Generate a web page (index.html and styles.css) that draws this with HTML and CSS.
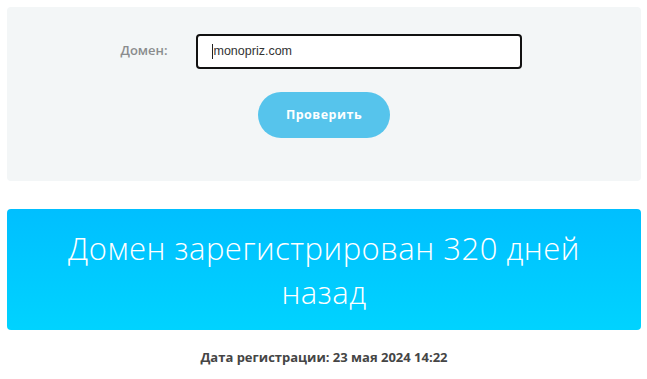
FILE: index.html
```html
<!DOCTYPE html>
<html lang="ru">
<head>
<meta charset="utf-8">
<title>Проверка домена</title>
<link rel="stylesheet" href="styles.css">
</head>
<body>
<div class="page">
  <form class="panel">
    <div class="row">
      <label class="label" for="domain">Домен:</label>
      <div class="input"><span class="caret"></span>monopriz.com</div>
    </div>
    <button type="button" class="btn">Проверить</button>
  </form>
  <div class="result">Домен зарегистрирован 320 дней<br>назад</div>
  <p class="date">Дата регистрации: 23 мая 2024 14:22</p>
</div>
</body>
</html>
```
FILE: styles.css
```css
html, body { margin: 0; padding: 0; background: #fff; }
body { font-family: "Open Sans", "Liberation Sans", sans-serif; }
.page { padding: 7px 6px 0 7px; }
.panel {
  margin: 0;
  background: #f3f6f7;
  border-radius: 4px;
  padding: 27px 0 43px;
  display: flex;
  flex-direction: column;
  align-items: center;
}
.row {
  display: flex;
  align-items: center;
  margin-left: -6px;
}
.label {
  font-size: 13px;
  font-weight: 600;
  color: #8a8c8e;
  width: 75px;
  margin-bottom: 4px;
}
.input {
  box-sizing: border-box;
  width: 326px;
  height: 35px;
  border: 2px solid #111;
  border-radius: 4px;
  background: #fff;
  font-family: "Liberation Sans", sans-serif;
  font-size: 12.5px;
  color: #333;
  display: flex;
  align-items: center;
  padding: 0 0 1px 14px;
}
.caret {
  display: inline-block;
  width: 1px;
  height: 15px;
  background: #222;
  margin-right: 1px;
}
.btn {
  margin-top: 23px;
  width: 132px;
  height: 46px;
  border: 0;
  border-radius: 23px;
  background: #56c4ec;
  color: #fff;
  font-family: "Open Sans", sans-serif;
  font-size: 12.5px;
  letter-spacing: 0.5px;
  font-weight: 700;
  padding: 0 0 2px;
}
.result {
  margin-top: 28px;
  height: 121px;
  box-sizing: border-box;
  padding: 17px 10px 0;
  border-radius: 4px;
  background: linear-gradient(to bottom, #00bfff, #00d3ff);
  color: #fff;
  text-align: center;
  font-size: 31px;
  letter-spacing: 0.5px;
  font-weight: 300;
  line-height: 44px;
}
.date {
  margin: 18px 0 0;
  text-align: center;
  font-size: 13px;
  font-weight: 700;
  color: #454545;
}
```
